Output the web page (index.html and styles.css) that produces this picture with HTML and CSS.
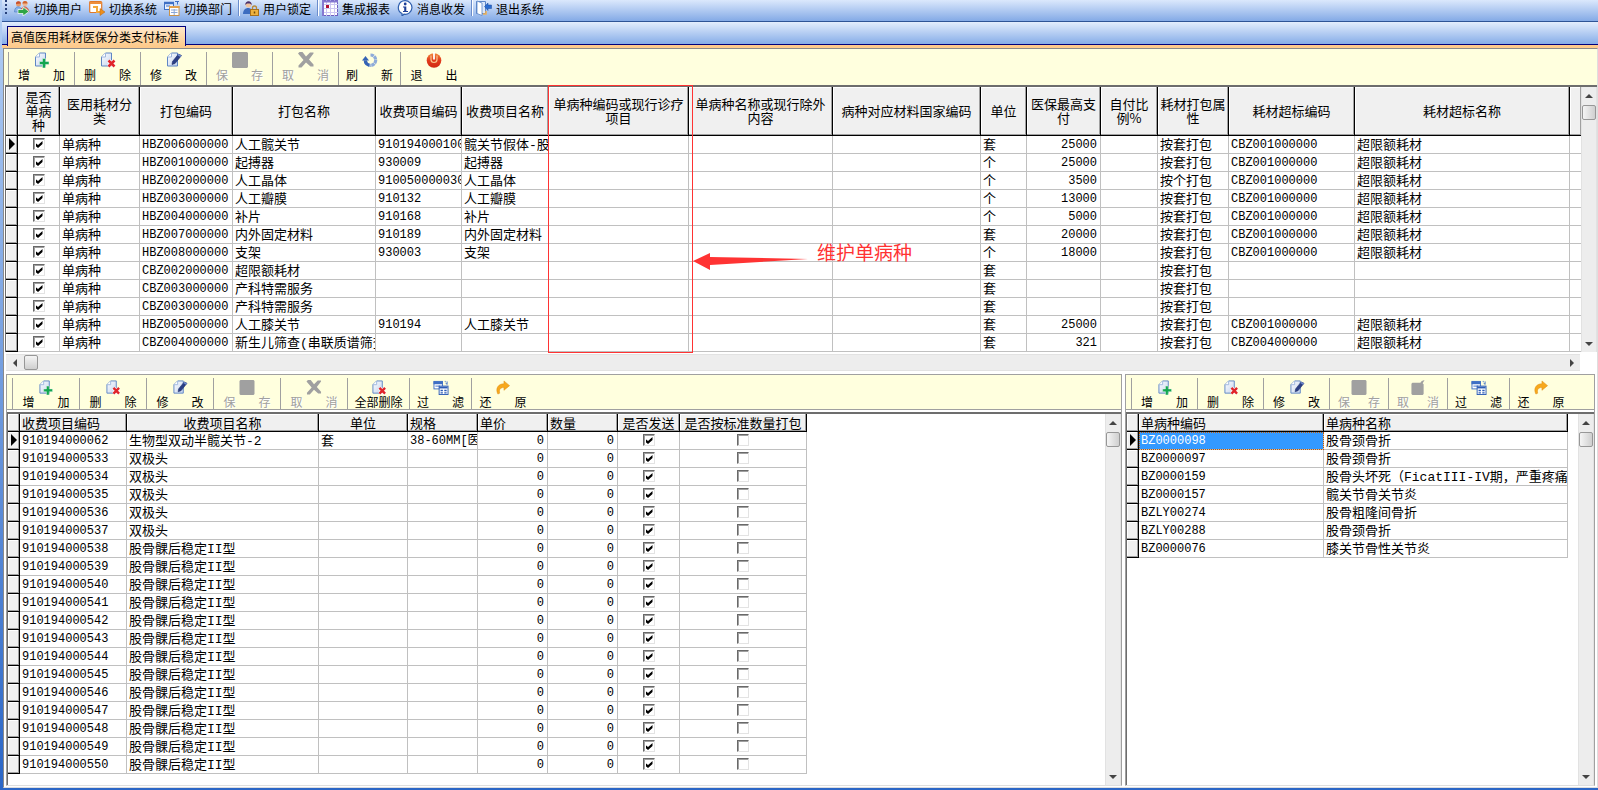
FILE: index.html
```html
<!DOCTYPE html>
<html lang="zh-CN">
<head>
  <meta charset="UTF-8">
  <meta name="viewport" content="width=device-width, initial-scale=1.0">
  <title>高值医用耗材医保分类支付标准</title>
  <link rel="stylesheet" href="styles.css">
</head>
<body>
  <!-- icon sprites -->
  <svg class="sprites" aria-hidden="true">
    <defs>
      <linearGradient id="pageFill" x1="0" y1="0" x2="1" y2="1">
        <stop offset="0" stop-color="#ffffff"/>
        <stop offset="1" stop-color="#c3d3ee"/>
      </linearGradient>
      <linearGradient id="redFill" x1="0" y1="0" x2="0" y2="1">
        <stop offset="0" stop-color="#f28a3c"/>
        <stop offset="0.5" stop-color="#e23a1c"/>
        <stop offset="1" stop-color="#d02a12"/>
      </linearGradient>
    </defs>
    <symbol id="page" viewBox="0 0 16 16">
      <path d="M5.500 1H11.500V14H1.500V5Z" fill="url(#pageFill)" stroke="#5f86c4"/>
      <path d="M5.500 1V5H1.500" fill="#fff" stroke="#9db6de"/>
    </symbol>
    <symbol id="add" viewBox="0 0 16 16">
      <use href="#page"/>
      <path d="M8.500 6.500h3v3h3.500v3h-3.500v3.500h-3v-3.500h-3v-3h3z" fill="#12a650" stroke="#e9f7ee" stroke-width=".5"/>
    </symbol>
    <symbol id="del" viewBox="0 0 16 16">
      <use href="#page"/>
      <path d="M8.500 8.500l6 6M14.500 8.500l-6 6" stroke="#fff" stroke-width="4"/>
      <path d="M8.500 8.500l6 6M14.500 8.500l-6 6" stroke="#e0242a" stroke-width="2.600"/>
    </symbol>
    <symbol id="edit" viewBox="0 0 16 16">
      <use href="#page"/>
      <path d="M12.500 2l3 1.500L9 11.500l-3 1 .5-3z" fill="#2b3f86" stroke="#1d2c66" stroke-width=".6"/>
      <path d="M12.500 2l3 1.500-1 1.500-3-1.700z" fill="#6f8bd0"/>
    </symbol>
    <symbol id="save" viewBox="0 0 16 16">
      <path d="M0 1l1-1h14l1 1v14l-1 1H1l-1-1z" fill="#a0a0a0"/>
    </symbol>
    <symbol id="cancel" viewBox="0 0 16 16">
      <path d="M0 1.500L1.500 0h3L8 4.500 12 0.500h3.500v1L11 7.500 15.500 12.500v2h-3L8 10.500 3.500 15.500H.5v-2L5.500 8z" fill="#a0a0a0"/>
    </symbol>
    <symbol id="undo" viewBox="0 0 16 16">
      <path d="M1 4l1-1h8.500l1.500-2 3-1-2 3.500 1 1V15l-1 1H2l-1-1z" fill="#a0a0a0"/>
    </symbol>
    <symbol id="refresh" viewBox="0 0 16 16">
      <path d="M8.500 3a5.200 5.200 0 1 1-5.200 5" fill="none" stroke="#8eabd9" stroke-width="3.200" stroke-dasharray="3.400 .5"/>
      <path d="M3.300 8.500a5 5 0 0 0 4 4.600" fill="none" stroke="#3563b4" stroke-width="3.200"/>
      <path d="M0 8.500L3.500 4l3.500 4.500z" fill="#3563b4"/>
    </symbol>
    <symbol id="power" viewBox="0 0 16 16">
      <circle cx="8" cy="8.500" r="7.300" fill="url(#redFill)"/>
      <path d="M5 3.500v4a3 3 0 0 0 6 0v-4" fill="none" stroke="#f8c48c" stroke-width="1.200"/>
      <path d="M8 0v7.500" stroke="#fff" stroke-width="1.800"/>
    </symbol>
    <symbol id="filter" viewBox="0 0 16 16">
      <rect x=".5" y="1.500" width="9" height="8" fill="#fff" stroke="#3e6fc4"/>
      <path d="M0 3h10" stroke="#3e6fc4" stroke-width="3"/>
      <path d="M2 6.500h5M12 1.500h1M14.500 1.500v3M13 3l1.500 2" stroke="#3e6fc4"/>
      <rect x="6" y="6.500" width="9.500" height="9" fill="#fff" stroke="#2c5cb5"/>
      <path d="M6 8h9" stroke="#2c5cb5" stroke-width="2"/>
      <path d="M7.500 10.500h2.500v1.500h-2.500zM11.500 10.500h2.500v1.500h-2.500zM7.500 13h2.500v1.500h-2.500zM11.500 13h2.500v1.500h-2.500z" fill="#2c5cb5"/>
    </symbol>
    <symbol id="restore" viewBox="0 0 16 16">
      <path d="M2.500 15C-.5 9 3 4 9 4V1l6 5-6 5V8C5 8 3.500 10.500 4.500 14z" fill="#f7a81c" stroke="#dd8a10" stroke-width=".5"/>
    </symbol>
    <symbol id="users" viewBox="0 0 16 16">
      <circle cx="4.500" cy="4" r="2.500" fill="#e79a6a"/>
      <path d="M2 4a2.500 2.500 0 0 1 5-.5z" fill="#c8502c"/>
      <path d="M.5 12c0-7 7-7 8 0z" fill="#8ab3ea" stroke="#4a78c0" stroke-width=".6"/>
      <circle cx="11" cy="3.500" r="2.500" fill="#f0b58c"/>
      <path d="M8.500 3.500a2.500 2.500 0 0 1 5 0z" fill="#d0642e"/>
      <path d="M6.500 12c0-7 8-7 8.500 0z" fill="#e58c6c" stroke="#b0482e" stroke-width=".6"/>
      <path d="M4 9.500h5V7l6 4.500-6 4.500v-2.500H4z" fill="#2fa444" stroke="#fff" stroke-width=".7"/>
    </symbol>
    <symbol id="system" viewBox="0 0 16 16">
      <rect x=".7" y="1.500" width="12" height="11" rx="1" fill="#fff" stroke="#e0792a" stroke-width="1.200"/>
      <path d="M1 3h11.500" stroke="#ee8f3c" stroke-width="2"/>
      <path d="M4 7h4v5h4" fill="none" stroke="#f4a93a" stroke-width="2"/>
      <path d="M11 8.500l5 3.500-5 3.500z" fill="#ee8f1c" stroke="#b86410" stroke-width=".5"/>
    </symbol>
    <symbol id="dept" viewBox="0 0 16 16">
      <rect x=".5" y="2.500" width="9" height="7" fill="#eaf2ff" stroke="#3e6fc4"/>
      <path d="M0 3h10" stroke="#3e6fc4" stroke-width="2.500"/>
      <path d="M2 6h4M11 1.500h4M13.500 1v3.500" stroke="#3e6fc4"/>
      <rect x="5.500" y="6.500" width="9.500" height="9" fill="#fff" stroke="#c7924c"/>
      <path d="M5 7h10.500" stroke="#e3a14c" stroke-width="2"/>
      <path d="M7 10h6.500M7 12.500h6.500M10.200 9v6" stroke="#8aa8d8"/>
    </symbol>
    <symbol id="lock" viewBox="0 0 16 16">
      <path d="M0 14C0 6 10 6 10.500 14z" fill="#3c6cc0"/>
      <circle cx="5.500" cy="4.500" r="3" fill="#f0c4a0"/>
      <path d="M2.300 5C2 0 9 0 8.700 5L7 3.500H4z" fill="#47306e"/>
      <path d="M9.500 10V8a2 2 0 0 1 4 0v2" fill="none" stroke="#b88a3a" stroke-width="1.300"/>
      <rect x="7.500" y="9.500" width="8" height="6" fill="#f0b23e" stroke="#a8701c"/>
      <path d="M11.500 11.500v2" stroke="#704808" stroke-width="1.500"/>
    </symbol>
    <symbol id="report" viewBox="0 0 16 16">
      <rect x=".5" y=".5" width="15" height="15" fill="#fff" stroke="#6d5fc0"/>
      <path d="M4.500 0v16M8.500 0v16M12.500 0v16M0 4.500h16M0 8.500h16M0 12.500h16" stroke="#cdc6f2"/>
      <path d="M0 1.500h16M1 0v16" stroke="#8578d0" stroke-width="2"/>
      <rect x="4" y="5" width="3" height="3" fill="#b01030"/>
    </symbol>
    <symbol id="info" viewBox="0 0 16 16">
      <path d="M8 .7a6.800 6.800 0 1 1-1 13.500L5 16v-2.500A6.800 6.800 0 0 1 8 .7z" fill="#fff" stroke="#2f5fae" stroke-width="1.200"/>
      <circle cx="8.200" cy="4" r="1.400" fill="#1d3f96"/>
      <path d="M6 6.500h3.300v4.500H11v1H6v-1h1.200V7.500H6z" fill="#1d3f96"/>
    </symbol>
    <symbol id="exit" viewBox="0 0 16 16">
      <path d="M.5 1.500h9v12h-9z" fill="#dce8fa" stroke="#5c86c8"/>
      <path d="M1 1l5 2v12.500l-5-2z" fill="#fff" stroke="#5c86c8" stroke-width=".8"/>
      <path d="M7 14h3v-3" fill="none" stroke="#f0b050" stroke-width="1.500"/>
      <path d="M8.500 6.500L12 3v2h3.500v3.500H12v2z" fill="#2a6cd0" stroke="#1a489c" stroke-width=".5"/>
    </symbol>
  </svg>

  <nav class="menubar">
    <a href="#"><svg><use href="#users"/></svg>切换用户</a>
    <a href="#"><svg><use href="#system"/></svg>切换系统</a>
    <a href="#"><svg><use href="#dept"/></svg>切换部门</a>
    <a href="#" class="sep"><svg><use href="#lock"/></svg>用户锁定</a>
    <a href="#" class="sep"><svg><use href="#report"/></svg>集成报表</a>
    <a href="#"><svg><use href="#info"/></svg>消息收发</a>
    <a href="#" class="sep"><svg><use href="#exit"/></svg>退出系统</a>
  </nav>

  <div class="tabs">
    <button class="tab">高值医用耗材医保分类支付标准</button>
  </div>

  <main class="frame">
    <div class="toolbar main-toolbar">
      <button><svg><use href="#add"/></svg><span class="cap"><i>增</i><i>加</i></span></button>
      <button><svg><use href="#del"/></svg><span class="cap"><i>删</i><i>除</i></span></button>
      <button><svg><use href="#edit"/></svg><span class="cap"><i>修</i><i>改</i></span></button>
      <button disabled><svg><use href="#save"/></svg><span class="cap"><i>保</i><i>存</i></span></button>
      <button disabled><svg><use href="#cancel"/></svg><span class="cap"><i>取</i><i>消</i></span></button>
      <button class="narrow"><svg><use href="#refresh"/></svg><span class="cap"><i>刷</i><i>新</i></span></button>
      <button class="last"><svg><use href="#power"/></svg><span class="cap"><i>退</i><i>出</i></span></button>
    </div>

    <section class="top-grid">
      <div class="grid">
        <div class="grid-view">
          <table class="table-main">
            <colgroup>
              <col class="w12"><col class="w42"><col class="w80"><col class="w93"><col class="w143">
              <col class="w86"><col class="w87"><col class="w140"><col class="w144"><col class="w148">
              <col class="w46"><col class="w74"><col class="w57"><col class="w71"><col class="w126">
              <col class="w215"><col>
            </colgroup>
            <thead>
              <tr>
                <th></th><th>是否单病种</th><th>医用耗材分类</th><th>打包编码</th><th>打包名称</th>
                <th>收费项目编码</th><th>收费项目名称</th><th>单病种编码或现行诊疗项目</th>
                <th>单病种名称或现行除外内容</th><th>病种对应材料国家编码</th><th>单位</th>
                <th>医保最高支付</th><th class="tight">自付比例%</th><th>耗材打包属性</th>
                <th>耗材超标编码</th><th>耗材超标名称</th><th></th>
              </tr>
            </thead>
            <tbody id="mainRows"></tbody>
          </table>
        </div>
        <div class="vscroll"><span class="up"></span><span class="thumb"></span><span class="down"></span></div>
      </div>
      <div class="hscroll"><span class="left"></span><span class="thumb"></span><span class="right"></span></div>

      <div class="mark-box"></div>
      <svg class="mark-arrow" viewBox="0 0 116 18"><path d="M0 8L17 0V4L115 6 17 12V17Z" fill="#ff3333"/></svg>
      <span class="mark-text">维护单病种</span>
    </section>

    <div class="panes">
      <section class="pane">
        <div class="toolbar">
          <button><svg><use href="#add"/></svg><span class="cap"><i>增</i><i>加</i></span></button>
          <button><svg><use href="#del"/></svg><span class="cap"><i>删</i><i>除</i></span></button>
          <button><svg><use href="#edit"/></svg><span class="cap"><i>修</i><i>改</i></span></button>
          <button disabled><svg><use href="#save"/></svg><span class="cap"><i>保</i><i>存</i></span></button>
          <button disabled><svg><use href="#cancel"/></svg><span class="cap"><i>取</i><i>消</i></span></button>
          <button class="narrow"><svg><use href="#del"/></svg><span class="cap">全部删除</span></button>
          <button class="narrow"><svg><use href="#filter"/></svg><span class="cap"><i>过</i><i>滤</i></span></button>
          <button class="last narrow"><svg><use href="#restore"/></svg><span class="cap"><i>还</i><i>原</i></span></button>
        </div>
        <div class="grid">
          <div class="grid-view">
            <table class="table-items">
              <colgroup>
                <col class="w12"><col class="w107"><col class="w192"><col class="w89"><col class="w70">
                <col class="w70"><col class="w70"><col class="w62"><col class="w127">
              </colgroup>
              <thead>
                <tr>
                  <th></th><th class="l">收费项目编码</th><th>收费项目名称</th><th>单位</th><th class="l">规格</th>
                  <th class="l">单价</th><th class="l">数量</th><th>是否发送</th><th>是否按标准数量打包</th>
                </tr>
              </thead>
              <tbody id="itemRows"></tbody>
            </table>
          </div>
          <div class="vscroll"><span class="up"></span><span class="thumb"></span><span class="down"></span></div>
        </div>
      </section>

      <section class="pane">
        <div class="toolbar disease-toolbar">
          <button><svg><use href="#add"/></svg><span class="cap"><i>增</i><i>加</i></span></button>
          <button><svg><use href="#del"/></svg><span class="cap"><i>删</i><i>除</i></span></button>
          <button><svg><use href="#edit"/></svg><span class="cap"><i>修</i><i>改</i></span></button>
          <button class="small" disabled><svg><use href="#save"/></svg><span class="cap"><i>保</i><i>存</i></span></button>
          <button class="small" disabled><svg><use href="#undo"/></svg><span class="cap"><i>取</i><i>消</i></span></button>
          <button class="narrow"><svg><use href="#filter"/></svg><span class="cap"><i>过</i><i>滤</i></span></button>
          <button class="last narrow"><svg><use href="#restore"/></svg><span class="cap"><i>还</i><i>原</i></span></button>
        </div>
        <div class="grid">
          <div class="grid-view">
            <table class="table-disease">
              <colgroup><col class="w12"><col class="w185"><col class="w244"></colgroup>
              <thead>
                <tr><th></th><th class="l">单病种编码</th><th class="l">单病种名称</th></tr>
              </thead>
              <tbody id="diseaseRows"></tbody>
            </table>
          </div>
          <div class="vscroll"><span class="up"></span><span class="thumb"></span><span class="down"></span></div>
        </div>
      </section>
    </div>
  </main>

  <script src="script.js"></script>
</body>
</html>
```
FILE: styles.css
```css
* {
  margin: 0;
  padding: 0;
  box-sizing: border-box;
}

body {
  display: flex;
  flex-direction: column;
  height: 100vh;
  padding: 0 0 2px 2px;
  overflow: hidden;
  font-family: "Noto Sans CJK SC", sans-serif;
  font-size: 12px;
  color: #000;
  background: linear-gradient(#b4cff5, #2b66c6);
}

button {
  font: inherit;
  color: inherit;
  border: none;
  background: none;
}

.sprites {
  position: absolute;
  width: 0;
  height: 0;
}

/* Menu bar */
.menubar {
  display: flex;
  flex: none;
  height: 22px;
  padding-left: 3px;
  background: linear-gradient(#dbe8fc, #84aae6);
  border-bottom: 1px solid #2f5496;
}

.menubar::before {
  content: "";
  width: 2px;
  height: 16px;
  margin-right: 3px;
  background: repeating-linear-gradient(#27417a 0 2px, transparent 2px 4px);
}

.menubar a {
  display: flex;
  align-items: center;
  gap: 4px;
  height: 16px;
  padding: 0 3px 0 4px;
  color: #000;
  text-decoration: none;
}

.menubar svg {
  width: 16px;
  height: 16px;
}

.menubar .sep {
  margin-left: 3px;
  border-left: 1px solid #6a8ccb;
  box-shadow: inset 1px 0 #fff;
}

/* Tab strip */
.tabs {
  flex: none;
  height: 26px;
  padding: 4px 0 0 5px;
  background: linear-gradient(#e3edfd 0, #86ade8 22px, #00007e 22px, #00007e 23px, #fdca8c 23px);
}

.tab {
  height: 20px;
  padding: 0 6px 0 3px;
  line-height: 18px;
  border: 1px solid #00007e;
  border-bottom: none;
  background: linear-gradient(#ffe9cc, #fdca8c);
}

.frame {
  display: flex;
  flex: 1;
  flex-direction: column;
  min-height: 0;
  margin-left: 1px;
  border: 1px solid #8a8a8a;
  border-right-color: #dedede;
  border-bottom-color: #dedede;
  background: #fff;
}

/* Toolbars */
.toolbar {
  display: flex;
  flex: none;
  height: 35px;
  padding: 3px 0 0 5px;
  background: #ffffde;
  border-bottom: 1px solid #a0a0a0;
}

.main-toolbar {
  height: 36px;
  padding-left: 4px;
  border-bottom: none;
}

.toolbar::before {
  content: "";
  width: 1px;
  background: #a0a0a0;
}

.toolbar button {
  display: flex;
  flex-direction: column;
  align-items: center;
  width: 67px;
  padding-top: 2px;
  border-right: 1px solid #a0a0a0;
}

.main-toolbar button,
.disease-toolbar button {
  width: 66px;
}

.main-toolbar button {
  padding-top: 0;
}

.toolbar .narrow {
  width: 62px;
}

.toolbar .small {
  width: 59px;
}

.toolbar .last {
  border-right: none;
}

.toolbar svg {
  width: 16px;
  height: 16px;
}

.cap {
  display: flex;
  gap: 23px;
  line-height: 14px;
}

.small .cap {
  gap: 18px;
}

.cap i {
  font-style: normal;
}

.toolbar button:disabled {
  color: #a0a0a0;
  text-shadow: 1px 1px #fff;
}

/* Data grids */
.grid {
  display: flex;
  flex: 1;
  min-height: 0;
  border-top: 2px solid #6d6d6d;
  border-left: 1px solid #6d6d6d;
}

.grid-view {
  flex: 1;
  min-width: 0;
  overflow: hidden;
}

table {
  table-layout: fixed;
  border-collapse: separate;
  border-spacing: 0;
  font-size: 13px;
}

.table-main {
  width: 100%;
}

.table-items {
  width: 799px;
}

.table-disease {
  width: 441px;
}

th {
  height: 18px;
  padding: 0 2px;
  font-weight: normal;
  line-height: 14px;
  word-break: break-all;
  background: #f0f0f0;
  border-right: 1px solid #000;
  border-bottom: 1px solid #000;
  box-shadow: inset -1px -1px #a0a0a0, inset 1px 1px #fff;
}

th.l {
  text-align: left;
}

th.tight {
  padding: 0 6px;
}

.table-main th {
  height: 49px;
}

td {
  height: 18px;
  padding: 2px 2px 0;
  font-family: "Liberation Mono", "Noto Sans CJK SC", monospace;
  line-height: 15px;
  vertical-align: top;
  white-space: nowrap;
  overflow: hidden;
  border-right: 1px solid #c0c0c0;
  border-bottom: 1px solid #c0c0c0;
}

.table-main th:last-child,
.table-main td:last-child {
  border-right: none;
}

td.code,
td.num {
  padding-right: 0;
  font-size: 12px;
}

td.num {
  padding-right: 3px;
  text-align: right;
}

td.check {
  text-align: center;
  line-height: 0;
}

td.ind {
  padding: 2px 0 0 3px;
  background: #f0f0f0;
  border-color: #000;
  box-shadow: inset -1px -1px #a0a0a0, inset 1px 1px #fff;
}

tr.current td.ind::before {
  content: "";
  display: block;
  border: 6px solid transparent;
  border-left-color: #000;
  border-right: none;
}

td.selected {
  color: #fff;
  background: #3399ff;
  outline: 1px dotted #c25a00;
  outline-offset: -1px;
}

input[type="checkbox"] {
  appearance: none;
  width: 12px;
  height: 12px;
  background: #fff;
  border: 1px solid #e3e3e3;
  border-top-color: #696969;
  border-left-color: #696969;
  box-shadow: inset 1px 1px #a0a0a0;
}

input[type="checkbox"]:checked::after {
  content: "";
  display: block;
  width: 7px;
  height: 7px;
  margin: 2px;
  background: #000;
  clip-path: polygon(0 29%, 36% 57%, 100% 0, 100% 43%, 36% 100%, 0 71%);
}

.w12 { width: 12px; }
.w42 { width: 42px; }
.w46 { width: 46px; }
.w57 { width: 57px; }
.w62 { width: 62px; }
.w70 { width: 70px; }
.w71 { width: 71px; }
.w74 { width: 74px; }
.w80 { width: 80px; }
.w86 { width: 86px; }
.w87 { width: 87px; }
.w89 { width: 89px; }
.w93 { width: 93px; }
.w107 { width: 107px; }
.w126 { width: 126px; }
.w127 { width: 127px; }
.w140 { width: 140px; }
.w143 { width: 143px; }
.w144 { width: 144px; }
.w148 { width: 148px; }
.w185 { width: 185px; }
.w192 { width: 192px; }
.w215 { width: 215px; }
.w244 { width: 244px; }

/* Scroll bars */
.vscroll,
.hscroll {
  display: flex;
  flex: none;
  align-items: center;
  background: #ededed;
}

.vscroll {
  flex-direction: column;
  width: 16px;
  padding: 7px 0 6px;
  border-left: 1px solid #e2e2e2;
  border-right: 1px solid #e2e2e2;
}

.hscroll {
  height: 17px;
  margin: 2px 17px 0 1px;
  padding: 0 6px 0 7px;
  border-top: 1px solid #e2e2e2;
  border-bottom: 1px solid #e2e2e2;
}

.thumb {
  width: 14px;
  height: 15px;
  border: 1px solid #979797;
  border-radius: 2px;
  background: linear-gradient(90deg, #f5f5f5, #cfcfcf);
}

.vscroll .thumb {
  margin-top: 7px;
}

.hscroll .thumb {
  margin-left: 7px;
  background: linear-gradient(#f5f5f5, #cfcfcf);
}

.up,
.down,
.left,
.right {
  border: 4px solid transparent;
}

.up {
  border-top: none;
  border-bottom-color: #444;
}

.down {
  margin-top: auto;
  border-bottom: none;
  border-top-color: #444;
}

.left {
  border-left: none;
  border-right-color: #444;
}

.right {
  margin-left: auto;
  border-right: none;
  border-left-color: #444;
}

.top-grid {
  position: relative;
  flex: none;
  margin-left: 1px;
}

/* Red callout over the 单病种编码 column */
.mark-box {
  position: absolute;
  top: 0;
  left: 543px;
  width: 145px;
  height: 268px;
  border: 1px solid #ff3333;
}

.mark-arrow {
  position: absolute;
  top: 168px;
  left: 688px;
  width: 116px;
  height: 18px;
}

.mark-text {
  position: absolute;
  top: 154px;
  left: 812px;
  font-size: 19px;
  line-height: 26px;
  color: #ff3333;
}

/* Lower panes */
.panes {
  display: grid;
  flex: 1;
  grid-template-columns: 1fr 470px;
  gap: 3px;
  min-height: 0;
  margin: 3px 2px 1px;
}

.pane {
  display: flex;
  flex-direction: column;
  min-width: 0;
  min-height: 0;
  border: 1px solid #a0a0a0;
  border-bottom-color: #dedede;
}

.pane .grid {
  margin-top: 2px;
}
```
FILE: script.js
```js
// code, name, item code, item name, unit, max pay, pack type, over code, over name
const mainData = [
  ["HBZ006000000", "人工髋关节", "910194000100", "髋关节假体-股", "套", "25000", "按套打包", "CBZ001000000", "超限额耗材"],
  ["HBZ001000000", "起搏器", "930009", "起搏器", "个", "25000", "按套打包", "CBZ001000000", "超限额耗材"],
  ["HBZ002000000", "人工晶体", "910050000030", "人工晶体", "个", "3500", "按个打包", "CBZ001000000", "超限额耗材"],
  ["HBZ003000000", "人工瓣膜", "910132", "人工瓣膜", "个", "13000", "按套打包", "CBZ001000000", "超限额耗材"],
  ["HBZ004000000", "补片", "910168", "补片", "个", "5000", "按套打包", "CBZ001000000", "超限额耗材"],
  ["HBZ007000000", "内外固定材料", "910189", "内外固定材料", "套", "20000", "按套打包", "CBZ001000000", "超限额耗材"],
  ["HBZ008000000", "支架", "930003", "支架", "个", "18000", "按套打包", "CBZ001000000", "超限额耗材"],
  ["CBZ002000000", "超限额耗材", "", "", "套", "", "按套打包", "", ""],
  ["CBZ003000000", "产科特需服务", "", "", "套", "", "按套打包", "", ""],
  ["CBZ003000000", "产科特需服务", "", "", "套", "", "按套打包", "", ""],
  ["HBZ005000000", "人工膝关节", "910194", "人工膝关节", "套", "25000", "按套打包", "CBZ001000000", "超限额耗材"],
  ["CBZ004000000", "新生儿筛查(串联质谱筛查)", "", "", "套", "321", "按套打包", "CBZ004000000", "超限额耗材"]
];

const itemData = [["910194000062", "生物型双动半髋关节-2", "套", "38-60MM[医"]];
for (let n = 533; n <= 550; n++) {
  itemData.push(["910194000" + n, n < 538 ? "双极头" : "股骨髁后稳定II型", "", ""]);
}

const diseaseData = [
  ["BZ0000098", "股骨颈骨折"],
  ["BZ0000097", "股骨颈骨折"],
  ["BZ0000159", "股骨头坏死（FicatIII-IV期，严重疼痛伴"],
  ["BZ0000157", "髋关节骨关节炎"],
  ["BZLY00274", "股骨粗隆间骨折"],
  ["BZLY00288", "股骨颈骨折"],
  ["BZ0000076", "膝关节骨性关节炎"]
];

const cell = (text, cls = "") => `<td class="${cls}">${text}</td>`;
const check = (label, on) =>
  `<td class="check"><input type="checkbox" aria-label="${label}"${on ? " checked" : ""}></td>`;

function fill(id, rows, render) {
  document.getElementById(id).innerHTML = rows
    .map((r, i) => `<tr class="${i === 0 ? "current" : ""}">${cell("", "ind")}${render(r, i)}</tr>`)
    .join("");
}

fill("mainRows", mainData, (r) =>
  check("是否单病种", true) + cell("单病种") + cell(r[0], "code") + cell(r[1]) +
  cell(r[2], "code") + cell(r[3]) + cell("") + cell("") + cell("") + cell(r[4]) +
  cell(r[5], "num") + cell("") + cell(r[6]) + cell(r[7], "code") + cell(r[8]) + cell(""));

fill("itemRows", itemData, (r) =>
  cell(r[0], "code") + cell(r[1]) + cell(r[2]) + cell(r[3], "code") +
  cell("0", "num") + cell("0", "num") + check("是否发送", true) + check("是否按标准数量打包", false));

fill("diseaseRows", diseaseData, (r, i) =>
  cell(r[0], i === 0 ? "code selected" : "code") + cell(r[1]));
```
